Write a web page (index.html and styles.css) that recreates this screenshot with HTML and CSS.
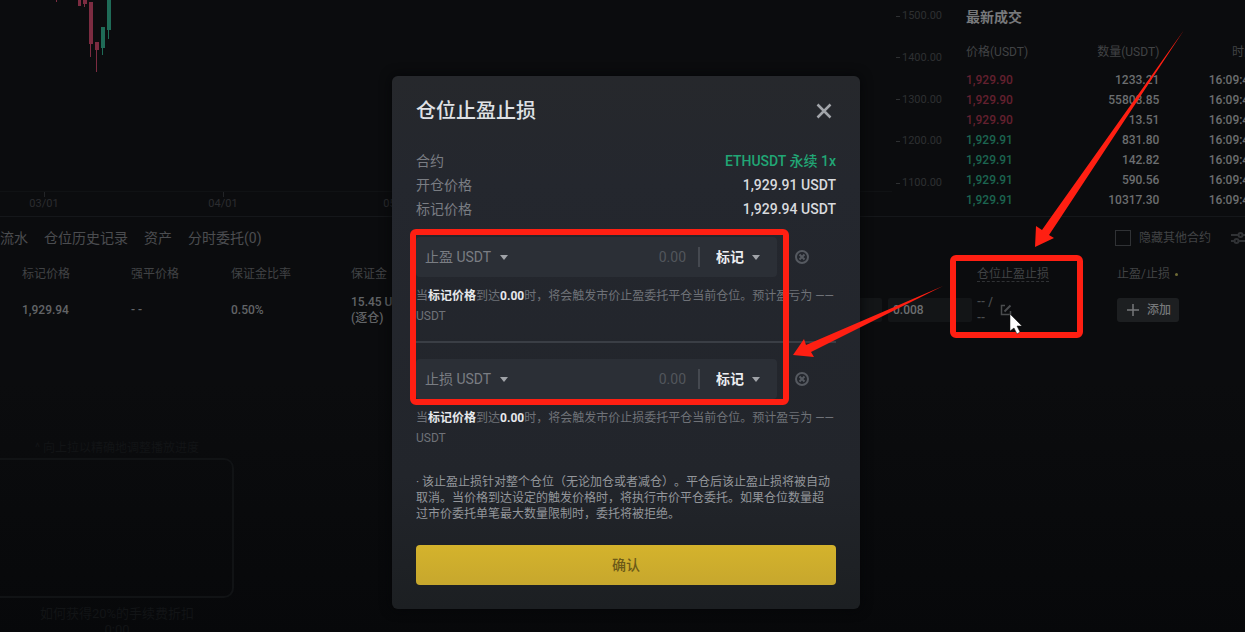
FILE: index.html
```html
<!DOCTYPE html>
<html lang="zh-CN">
<head>
  <meta charset="UTF-8" />
  <meta name="viewport" content="width=device-width, initial-scale=1.0" />
  <title>仓位止盈止损</title>
  <link rel="stylesheet" href="styles.css">
</head>
<body>

  <main class="page">
    <div class="market">
      <div class="chart">
        <svg width="892" height="216" viewBox="0 0 892 216">
          <g fill="#7c2c41">
            <rect x="56" y="0" width="1" height="2" />
            <rect x="78" y="0" width="3" height="6" />
            <rect x="83" y="0" width="4" height="4" /><rect x="84" y="3" width="1" height="4" />
            <rect x="89" y="2" width="4" height="42" /><rect x="90" y="44" width="1" height="13" />
            <rect x="95" y="42" width="4" height="8" /><rect x="96" y="50" width="1" height="22" />
          </g>
          <g fill="#1f6b57">
            <rect x="101" y="27" width="4" height="21" /><rect x="102" y="48" width="1" height="7" />
            <rect x="107" y="0" width="4" height="30" /><rect x="108" y="30" width="1" height="9" />
          </g>
          <path d="M0 191.500H892" stroke="#101214" />
          <path d="M44.500 192v5M223.500 192v5" stroke="#222427" />
          <g class="chart-label">
            <text x="44" y="207">03/01</text>
            <text x="223" y="207">04/01</text>
            <text x="398" y="207">05/01</text>
          </g>
        </svg>
      </div>
      <ul class="price-axis">
        <li>1500.00</li>
        <li>1400.00</li>
        <li>1300.00</li>
        <li>1200.00</li>
        <li>1100.00</li>
      </ul>
      <section class="trades">
        <h2>最新成交</h2>
        <table>
          <thead>
            <tr><th>价格(USDT)</th><th>数量(USDT)</th><th>时间</th></tr>
          </thead>
          <tbody>
            <tr><td class="sell">1,929.90</td><td>1233.21</td><td>16:09:47</td></tr>
            <tr><td class="sell">1,929.90</td><td>55808.85</td><td>16:09:47</td></tr>
            <tr><td class="sell">1,929.90</td><td>13.51</td><td>16:09:47</td></tr>
            <tr><td class="buy">1,929.91</td><td>831.80</td><td>16:09:46</td></tr>
            <tr><td class="buy">1,929.91</td><td>142.82</td><td>16:09:46</td></tr>
            <tr><td class="buy">1,929.91</td><td>590.56</td><td>16:09:46</td></tr>
            <tr><td class="buy">1,929.91</td><td>10317.30</td><td>16:09:46</td></tr>
          </tbody>
        </table>
      </section>
    </div>

    <section class="positions">
      <div class="toolbar">
        <nav class="tabs">
          <a href="#">流水</a>
          <a href="#">仓位历史记录</a>
          <a href="#">资产</a>
          <a href="#">分时委托(0)</a>
        </nav>
        <label class="hide-other"><input type="checkbox"> 隐藏其他合约</label>
        <button class="filter" type="button" aria-label="筛选">
          <svg width="16" height="16" viewBox="0 0 16 16" fill="none" stroke="currentColor" stroke-width="2">
            <path d="M0 5h7M12 5h4M0 11h3M8 11h8" />
            <circle cx="9.500" cy="5" r="2" /><circle cx="5.500" cy="11" r="2" />
          </svg>
        </button>
      </div>

      <table class="position-table">
        <colgroup>
          <col class="c-mark"><col class="c-liq"><col class="c-ratio"><col class="c-margin">
          <col class="c-price"><col class="c-qty"><col class="c-tpsl"><col class="c-add">
        </colgroup>
        <thead>
          <tr>
            <th>标记价格</th><th>强平价格</th><th>保证金比率</th><th>保证金</th>
            <th></th><th></th><th><span class="tip">仓位止盈止损</span></th>
            <th>止盈/止损 <i class="dot"></i></th>
          </tr>
        </thead>
        <tbody>
          <tr>
            <td>1,929.94</td>
            <td>- -</td>
            <td>0.50%</td>
            <td>15.45 USDT<br>(逐仓)</td>
            <td><input class="cell-input" type="text" aria-label="价格"></td>
            <td><input class="cell-input qty" type="text" value="0.008" aria-label="数量"></td>
            <td>
              <div class="tpsl">
                <span>-- /<br>--</span>
                <button type="button" aria-label="编辑">
                  <svg width="12" height="12" viewBox="0 0 12 12" fill="none" stroke="currentColor" stroke-width="1.500">
                    <path d="M5 1.500H1.500V10.500H10.500V7" /><path d="M4.500 7.500L10.500 1.500" stroke-width="2" />
                  </svg>
                </button>
              </div>
            </td>
            <td>
              <button class="add" type="button">
                <svg width="12" height="12" viewBox="0 0 12 12" stroke="currentColor" stroke-width="1.500"><path d="M6 0V12M0 6H12" /></svg>
                添加
              </button>
            </td>
          </tr>
        </tbody>
      </table>

      <figure class="preview">
        <p>^ 向上拉以精确地调整播放进度</p>
        <div class="preview-frame"></div>
        <figcaption>如何获得20%的手续费折扣<br>0:00</figcaption>
      </figure>
    </section>
  </main>

  <div class="overlay">
    <form class="modal" role="dialog" aria-labelledby="modal-title">
      <header>
        <h1 id="modal-title">仓位止盈止损</h1>
        <button class="close" type="button" aria-label="关闭">
          <svg width="16" height="16" viewBox="0 0 16 16" stroke="currentColor" stroke-width="2.500"><path d="M1.500 1.500L14.500 14.500M14.500 1.500L1.500 14.500" /></svg>
        </button>
      </header>

      <dl class="summary">
        <div><dt>合约</dt><dd class="contract">ETHUSDT 永续 1x</dd></div>
        <div><dt>开仓价格</dt><dd>1,929.91 USDT</dd></div>
        <div><dt>标记价格</dt><dd>1,929.94 USDT</dd></div>
      </dl>

      <div class="order-row">
        <div class="field">
          <span class="drop"><select aria-label="止盈单位"><option>止盈 USDT</option></select></span>
          <input type="text" placeholder="0.00" aria-label="止盈价格">
          <span class="drop trigger"><select aria-label="止盈触发类型"><option>标记</option><option>最新</option></select></span>
        </div>
        <button class="clear" type="button" aria-label="清除止盈">
          <svg width="16" height="16" viewBox="0 0 16 16" fill="none" stroke="currentColor" stroke-width="2"><circle cx="8" cy="8" r="6" /><path d="M5.500 5.500L10.500 10.500M10.500 5.500L5.500 10.500" /></svg>
        </button>
      </div>
      <p class="hint">当<b>标记价格</b>到达<b>0.00</b>时，将会触发市价止盈委托平仓当前仓位。预计盈亏为 —— USDT</p>

      <hr>

      <div class="order-row">
        <div class="field">
          <span class="drop"><select aria-label="止损单位"><option>止损 USDT</option></select></span>
          <input type="text" placeholder="0.00" aria-label="止损价格">
          <span class="drop trigger"><select aria-label="止损触发类型"><option>标记</option><option>最新</option></select></span>
        </div>
        <button class="clear" type="button" aria-label="清除止损">
          <svg width="16" height="16" viewBox="0 0 16 16" fill="none" stroke="currentColor" stroke-width="2"><circle cx="8" cy="8" r="6" /><path d="M5.500 5.500L10.500 10.500M10.500 5.500L5.500 10.500" /></svg>
        </button>
      </div>
      <p class="hint">当<b>标记价格</b>到达<b>0.00</b>时，将会触发市价止损委托平仓当前仓位。预计盈亏为 —— USDT</p>

      <p class="note">· 该止盈止损针对整个仓位（无论加仓或者减仓）。平仓后该止盈止损将被自动取消。当价格到达设定的触发价格时，将执行市价平仓委托。如果仓位数量超过市价委托单笔最大数量限制时，委托将被拒绝。</p>

      <button class="confirm" type="submit">确认</button>
    </form>
  </div>

  <!-- red marks and mouse pointer over the page -->
  <svg class="marks" width="1245" height="632" viewBox="0 0 1245 632">
    <g fill="none" stroke="#ff1f12" stroke-width="6">
      <rect x="413" y="232" width="373" height="170" rx="3" />
      <rect x="953" y="258" width="127" height="77" rx="3" />
    </g>
    <g fill="#ff1f12">
      <path d="M1184 30L1059 220L1049 235L1054 238L1035 247L1036 226L1042 230L1049 220Z" />
      <path d="M943 286L811 352L814 357L793 355L804 339L806 345Z" />
    </g>
    <path d="M1010 314V331L1014 328L1017 334L1020 332L1017 326H1022Z" fill="#fff" stroke="#111" stroke-width="0.500" />
  </svg>

</body>
</html>
```
FILE: styles.css
```css
* { box-sizing: border-box; }
body { margin: 0; background: #0b0c0e; color: #626467; font-family: Roboto, "Noto Sans CJK SC", sans-serif; font-size: 12px; line-height: 16px; }
h1, h2, p, ul, dl, dd, figure { margin: 0; padding: 0; }
ul { list-style: none; }
a { color: inherit; text-decoration: none; }
svg { display: block; }
button, input, select { font: inherit; color: inherit; background: none; border: 0; padding: 0; margin: 0; }
button { cursor: pointer; }
table { border-collapse: collapse; table-layout: fixed; }
th, td { padding: 0; text-align: left; }

.page { min-height: 100vh; overflow: hidden; background: linear-gradient(#0b0c0e 60%, #07080a); }

/* chart + trades */
.market { display: flex; height: 217px; border-bottom: 1px solid #15171a; }
.chart { flex: 1; min-width: 0; overflow: hidden; }
.chart-label { fill: #2b2d30; font-size: 11px; text-anchor: middle; }
.price-axis { width: 54px; padding: 8px 0 25px; display: flex; flex-direction: column; justify-content: space-between; color: #2e3032; font-size: 11px; }
.price-axis li { display: flex; align-items: center; gap: 2px; }
.price-axis li::before { content: ""; width: 4px; height: 1px; background: #2e3032; }
.trades { width: 295px; padding-left: 16px; overflow: hidden; }
.trades h2 { color: #77797b; font-size: 14px; line-height: 34px; }
.trades table { width: 290px; color: #6c6e70; font-weight: 500; }
.trades th { height: 36px; color: #414345; font-weight: 400; }
.trades td { height: 20px; }
.trades th:nth-child(n+2), .trades td:nth-child(n+2) { text-align: right; }
.trades .sell { color: #63202f; }
.trades .buy { color: #1b6450; }

/* positions */
.toolbar { display: flex; align-items: center; height: 41px; }
.tabs { display: flex; gap: 16px; margin-right: auto; color: #4b4d50; font-size: 14px; }
.hide-other { display: flex; align-items: center; gap: 8px; color: #414345; }
.hide-other input { appearance: none; width: 16px; height: 16px; border: 1px solid #303235; }
.filter { width: 34px; padding-left: 20px; color: #303235; }
.position-table { width: 100%; }
.position-table th { height: 32px; color: #414345; font-weight: 400; }
.position-table td { height: 40px; font-weight: 500; }
.position-table th:first-child, .position-table td:first-child { padding-left: 22px; }
.c-mark { width: 131px; }
.c-liq { width: 100px; }
.c-ratio { width: 120px; }
.c-margin { width: 120px; }
.c-qty { width: 89px; }
.c-tpsl { width: 140px; }
.c-add { width: 128px; }
.tip { border-bottom: 1px dashed #303235; }
.dot { display: inline-block; width: 3px; height: 3px; margin-left: 2px; border-radius: 50%; background: #6d6a35; vertical-align: middle; }
.cell-input { display: block; width: calc(100% - 6px); height: 24px; padding: 0 5px; border-radius: 2px; background: #131517; color: #6c6e70; }
.cell-input.qty { width: 84px; }
.tpsl { display: flex; align-items: center; gap: 7px; color: #4a4c4e; }
.add { display: flex; align-items: center; gap: 8px; height: 24px; padding: 0 8px 0 10px; border-radius: 3px; background: #1d1f21; color: #76787a; }
.preview { width: 234px; margin-top: 108px; color: #121416; text-align: center; }
.preview p { line-height: 20px; }
.preview-frame { height: 140px; border: 2px solid #111315; border-left: 0; border-radius: 0 10px 10px 0; }
.preview figcaption { padding-top: 8px; font-size: 13px; }

/* modal */
.overlay { position: absolute; inset: 0; display: flex; justify-content: center; align-items: flex-start; padding: 76px 0 0 7px; overflow: hidden; }
.modal { width: 468px; padding: 21px 24px 24px; border-radius: 6px; background: linear-gradient(#26282c, #24272e 20%, #22252b 75%, #1c1f22); box-shadow: 0 0 12px #050608; color: #7a7d83; }
.modal header { display: flex; justify-content: space-between; align-items: center; margin-bottom: 24px; }
.modal h1 { color: #dfe1e5; font-size: 20px; font-weight: 500; line-height: 28px; }
.close { width: 24px; padding: 4px; color: #a2a5aa; }
.summary { margin-bottom: 16px; font-size: 14px; line-height: 24px; }
.summary div { display: flex; justify-content: space-between; }
.summary dd { color: #d8dade; font-weight: 500; }
.summary .contract { color: #21a675; }
.order-row { display: flex; align-items: center; margin-bottom: 9px; font-size: 14px; }
.field { flex: 1; display: flex; align-items: center; height: 40px; padding: 0 17px 0 9px; border-radius: 4px; background: #2b2f36; }
.field input { flex: 1; min-width: 0; padding-right: 12px; text-align: right; }
.field input::placeholder { color: #52565c; opacity: 1; }
.drop { display: flex; align-items: center; gap: 8px; }
.drop::after { content: ""; border: 4px solid transparent; border-top: 5px solid #a0a3a8; border-bottom: 0; }
.drop select { appearance: none; }
.trigger { padding-left: 16px; border-left: 2px solid #454950; color: #eceef1; font-weight: 700; line-height: 20px; }
.clear { width: 60px; padding-left: 17px; color: #555960; }
.hint { color: #6f7278; line-height: 20px; }
.hint b { color: #e6e8eb; }
.modal hr { height: 2px; margin: 15px 0 16px; border: 0; background: #3a3e45; }
.note { margin: 26px 0 23px; padding-right: 2px; color: #93969b; text-spacing-trim: space-all; }
.confirm { display: block; width: 100%; height: 40px; border-radius: 4px; background: linear-gradient(#d4b32c, #c7a72d); color: #6c5a18; font-size: 14px; font-weight: 500; }

.marks { position: absolute; top: 0; left: 0; pointer-events: none; }
```
